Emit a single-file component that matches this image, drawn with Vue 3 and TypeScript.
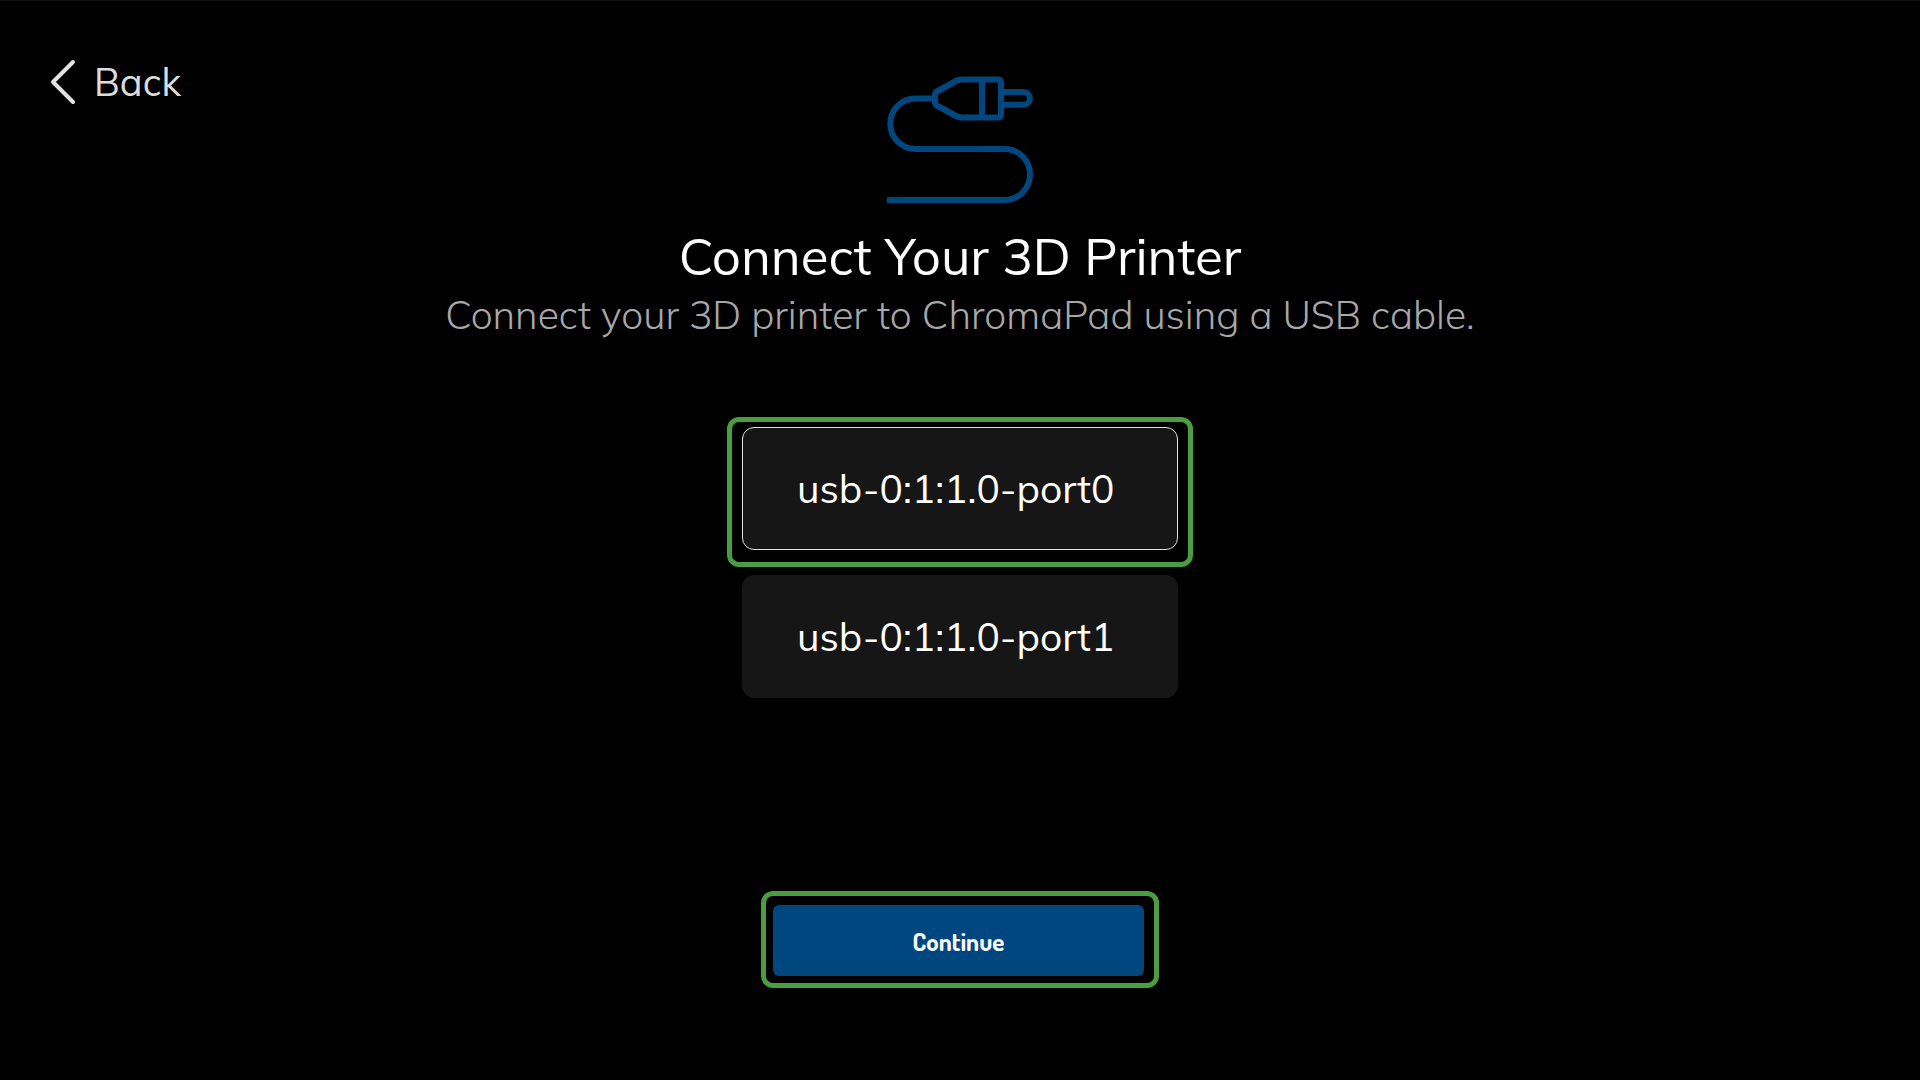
<script setup lang="ts">
import { ref } from 'vue'

const ports: string[] = ['usb-0:1:1.0-port0', 'usb-0:1:1.0-port1']
const selected = ref<string>(ports[0])
</script>

<template>
  <main class="screen">
    <nav>
      <button type="button" class="back">
        <svg class="chevron" width="26" height="46" viewBox="0 0 26 46" aria-hidden="true">
          <path d="M23 3 L3 23 L23 43" />
        </svg>
        <span>Back</span>
      </button>
    </nav>

    <form class="content" @submit.prevent>
      <svg class="cable" width="146" height="128" viewBox="27 16 146 128" aria-hidden="true">
        <path d="M27 140 H144.500 A25.500 25.500 0 0 0 144.500 89 H55.500 A25.200 25.200 0 0 1 55.500 38.500 H74" />
        <path d="M101 19.500 H138 Q141 19.500 141 22.500 V54.500 Q141 57.500 138 57.500 H101 L97 56.500 L76 45 L75 43 V34 L76 32 L97 20.500 Z" />
        <path d="M122 19 V58 M141 32 H163.500 A6.400 6.400 0 0 1 163.500 44.800 H141" />
      </svg>
      <h1>Connect Your 3D Printer</h1>
      <p>Connect your 3D printer to ChromaPad using a USB cable.</p>

      <div class="ports" role="radiogroup" aria-label="USB port">
        <div v-for="port in ports" :key="port" class="slot" :class="{ active: port === selected }">
          <label class="port">
            <input v-model="selected" type="radio" name="port" :value="port" />
            <span>{{ port }}</span>
          </label>
        </div>
      </div>

      <div class="action">
        <button type="submit" class="continue">Continue</button>
      </div>
    </form>
  </main>
</template>

<style>
body {
  margin: 0;
  background: #000;
}
</style>

<style scoped>
.screen {
  box-sizing: border-box;
  min-height: 100vh;
  display: grid;
  grid-template-columns: 1fr auto 1fr;
  border-top: 1px solid #111;
  background: #000;
  color: #fff;
  font-family: Mulish, Lato, "Open Sans", sans-serif;
}
nav {
  padding: 58px 0 0 50px;
}
button {
  border: 0;
  padding: 0;
  font-family: inherit;
  cursor: pointer;
}
.back {
  display: flex;
  align-items: center;
  gap: 18px;
  background: none;
  color: #dcdcdc;
  font-size: 38px;
  font-weight: 400;
  line-height: 46px;
}
.chevron {
  fill: none;
  stroke: #e2e2e2;
  stroke-width: 4;
  stroke-linecap: round;
  stroke-linejoin: round;
}
.content {
  display: flex;
  flex-direction: column;
  align-items: center;
  padding: 75px 0 92px;
}
.cable {
  fill: none;
  stroke: #00467f;
  stroke-width: 6;
  stroke-linejoin: round;
}
h1 {
  margin: 20px 0 0;
  font-size: 51px;
  line-height: 64px;
  font-weight: 400;
}
p {
  margin: 3px 0 0;
  color: #a8a8a8;
  font-size: 39px;
  font-weight: 300;
  line-height: 48px;
}
.ports {
  margin-top: 78px;
  display: flex;
  flex-direction: column;
  align-items: center;
  gap: 8px;
}
.slot.active {
  padding: 5px 10px 12px;
  border: 5px solid #4a9e3f;
  border-radius: 12px;
}
.port {
  box-sizing: border-box;
  width: 436px;
  height: 123px;
  display: flex;
  align-items: center;
  padding: 0 54px;
  border: 1px solid #161616;
  border-radius: 12px;
  background: #161616;
  font-size: 39px;
  line-height: 48px;
  white-space: nowrap;
  cursor: pointer;
}
.active .port {
  border-color: #e0e0e0;
}
.port input {
  appearance: none;
  width: 0;
  height: 0;
  margin: 0;
}
.action {
  margin-top: auto;
  padding: 9px 10px 7px 7px;
  border: 5px solid #4a9e3f;
  border-radius: 12px;
}
.continue {
  display: block;
  width: 371px;
  height: 71px;
  border-radius: 6px;
  background: #00467f;
  color: #fff;
  font-family: Dosis, "Liberation Sans Narrow", Roboto, sans-serif;
  font-size: 25px;
  line-height: 32px;
  font-weight: 700;
}
</style>
